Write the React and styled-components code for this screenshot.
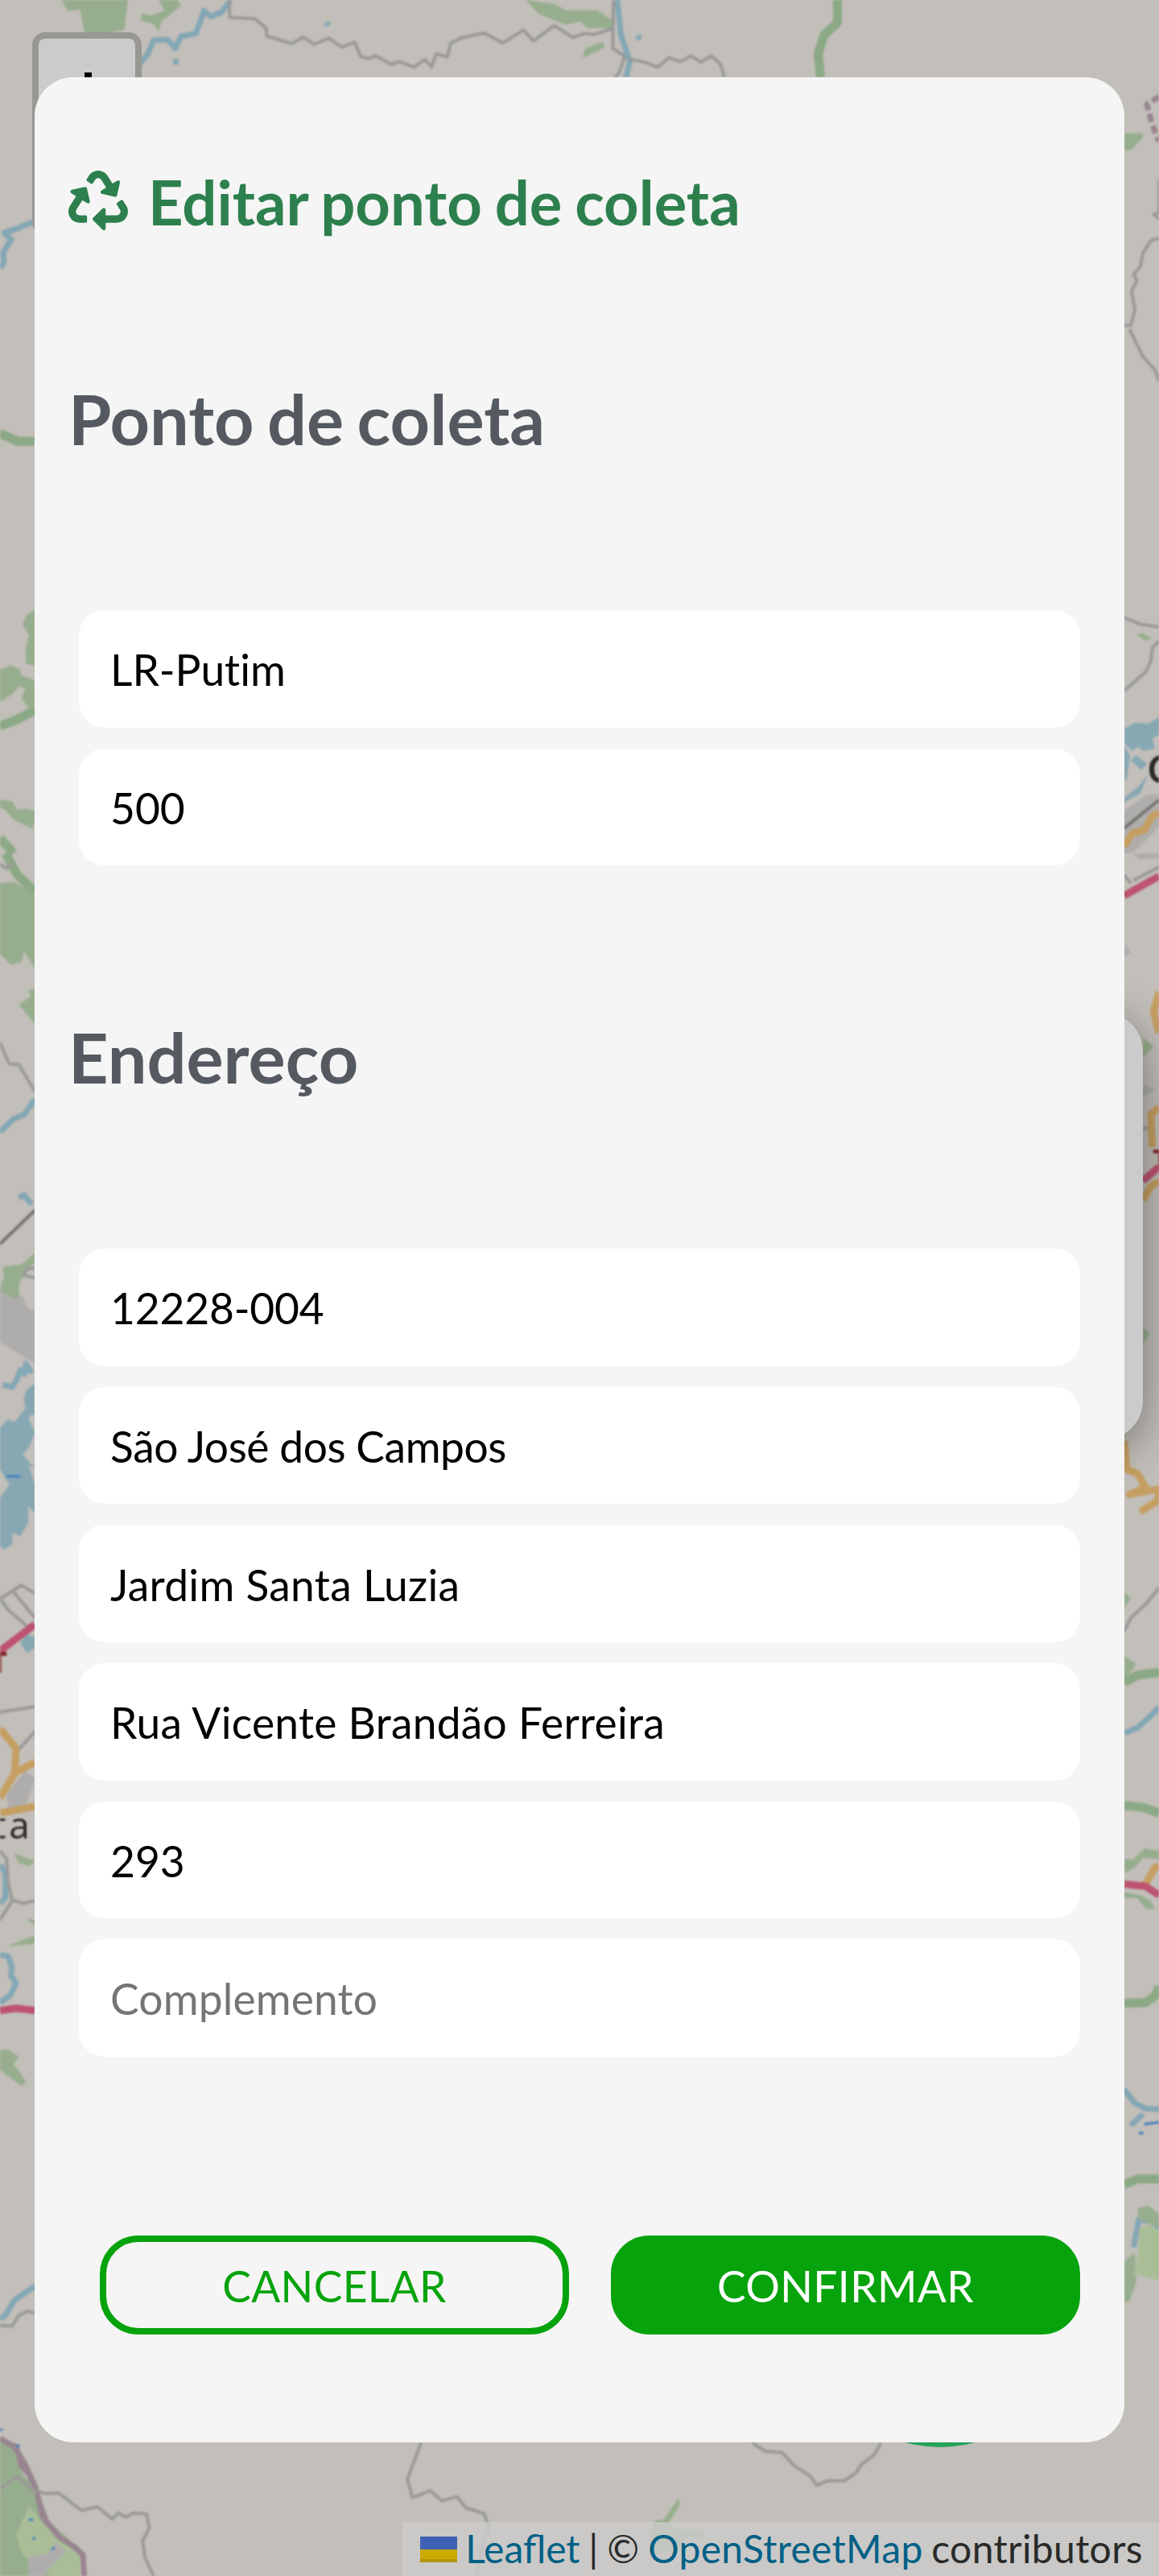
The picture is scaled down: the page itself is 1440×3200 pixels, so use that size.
import React from "react";
import styled, { createGlobalStyle } from "styled-components";
import { FaRecycle } from "react-icons/fa";

const GlobalStyle = createGlobalStyle`
  * { box-sizing: border-box; }
  body { margin: 0; font-family: Lato, "Liberation Sans", sans-serif; }
`;

const Screen = styled.main`
  position: relative;
  width: 1440px;
  height: 3200px;
  padding: 96px 43px 0;
  overflow: hidden;
  background: #c2beb9;
`;

const MapCanvas = styled.svg`
  position: absolute;
  inset: 0;
  width: 1440px;
  height: 3200px;
  filter: blur(0.8px);
  .soft path { vector-effect: non-scaling-stroke; }
  path { fill: none; stroke-linejoin: round; stroke-linecap: butt; }
  .wood { fill: #97ae8e; }
  .water { fill: #87a8b3; }
  .urban { fill: #aeadac; }
  .park { fill: #a9bd97; }
  .river { stroke: #83a7b5; stroke-width: 7; }
  .deep { stroke: #4380c0; stroke-width: 3; }
  .limit { stroke: #9a9a98; stroke-width: 4; }
  .state { stroke: #98858f; stroke-width: 7; }
  .trunk { stroke: #8aa984; stroke-width: 11; }
  .primary { stroke: #c59f62; stroke-width: 9; }
  .motorway { stroke: #bd5370; stroke-width: 9; }
  .rail { stroke: #777672; stroke-width: 4; }
  text { font-family: "Noto Sans", sans-serif; }
`;

const ZoomControl = styled.div`
  position: absolute;
  left: 40px;
  top: 40px;
  width: 136px;
  height: 252px;
  border: 8px solid #999792;
  border-radius: 16px;
  background: #cbcbcb;
  display: flex;
  justify-content: center;
  padding-top: 42px;
`;

const PlusIcon = styled.svg`
  width: 46px;
  height: 46px;
`;

const Popup = styled.div`
  position: absolute;
  left: 800px;
  top: 1258px;
  width: 620px;
  height: 530px;
  border-radius: 48px;
  background: #cbcbcb;
  box-shadow: 0 12px 56px rgba(0, 0, 0, 0.4);
`;

const Marker = styled.div`
  position: absolute;
  left: 1003px;
  top: 2710px;
  width: 330px;
  height: 330px;
  border-radius: 50%;
  background: #25a35a;
`;

const Attribution = styled.footer`
  position: absolute;
  right: 0;
  bottom: 0;
  height: 67px;
  padding: 0 20px 2px 22px;
  display: flex;
  align-items: center;
  background: rgba(204, 204, 204, 0.8);
  color: #292929;
  font-size: 48px;
  line-height: 65px;
  white-space: pre;
  letter-spacing: 0.36px;
  word-spacing: -2px;
`;

const MapLink = styled.span`
  color: #006086;
  letter-spacing: ${({ $tight }) => ($tight ? "0" : "0.3px")};
`;

const Flag = styled.svg`
  width: 46px;
  height: 32px;
  margin: 2px 10px 0 0;
`;

const Modal = styled.section`
  position: relative;
  width: 1354px;
  height: 2938px;
  padding: 109px 55px 0 42px;
  border-radius: 48px;
  background: #f5f5f5;
`;

const Title = styled.h1`
  display: flex;
  align-items: center;
  gap: 25px;
  height: 92px;
  margin: 0;
  color: #2d804e;
  font-size: 76px;
  line-height: 92px;
  font-weight: 700;
  white-space: nowrap;
  word-spacing: -2.7px;
`;

const RecycleIcon = styled(FaRecycle)`
  width: 74px;
  height: 74px;
  margin-bottom: 4px;
`;

const Group = styled.section`
  padding-top: ${({ $top }) => $top}px;
`;

const GroupTitle = styled.h2`
  height: 104px;
  margin: 0 0 186px;
  color: #555a61;
  font-size: 86.4px;
  line-height: 104px;
  font-weight: 700;
  word-spacing: -4.6px;
`;

const Fields = styled.div`
  display: flex;
  flex-direction: column;
  gap: 26px;
  padding-left: 13px;
`;

const Field = styled.input`
  display: block;
  width: 100%;
  height: 145.6px;
  padding: 1px 39px 0;
  border: 0;
  border-radius: 32px;
  outline: 0;
  background: #fff;
  color: #000;
  font: 400 53.33px Lato, "Liberation Sans", sans-serif;
  font-variant-ligatures: none;
  letter-spacing: ${({ $tracking }) => $tracking}px;
  &::placeholder { color: #757575; opacity: 1; }
`;

const Actions = styled.div`
  display: flex;
  gap: 52px;
  padding: 222px 0 0 39px;
`;

const Button = styled.button`
  flex: 1;
  height: 123px;
  padding: 2px 0 0;
  border: 8px solid #06a30c;
  border-radius: 48px;
  background: ${({ $filled }) => ($filled ? "#06a30c" : "transparent")};
  color: ${({ $filled }) => ($filled ? "#fff" : "#06a30c")};
  font: 400 53.33px Lato, "Liberation Sans", sans-serif;
  letter-spacing: 0.36px;
`;

const point = [
  { value: "LR-Putim", tracking: 0 },
  { value: "500", tracking: 0 },
];

const address = [
  { value: "12228-004", tracking: -0.2 },
  { value: "São José dos Campos", tracking: -0.43 },
  { value: "Jardim Santa Luzia", tracking: 0.28 },
  { value: "Rua Vicente Brandão Ferreira", tracking: 0.25 },
  { value: "293", tracking: 0 },
  { value: "", tracking: 0.15 },
];

function MapNorth() {
  return (
    <g className="soft" transform="scale(.91837 .33333)">
      <path className="wood" d="M83 0 92 42 108 35 115 132 140 125 168 112 173 0ZM215 0 222 40 205 58 192 50 190 75 208 90 215 118 218 80 232 50 245 20 240 0ZM712 0 728 50 765 92 785 80 795 105 828 105 828 75 808 38 765 38 750 15ZM815 155 792 180 788 215 802 198 818 178Z" />
      <path className="river" d="M312 0 300 45 285 62 276 40 265 125 245 135 237 180 227 148 208 150 200 200 185 250M835 0 840 130 852 230 847 288M442 84 444 96M238 220V240M863 132 865 148" />
      <path className="limit" d="M310 0 311 65 345 70 360 105 361 135 395 162 410 138 425 165 445 142 462 176 480 158 488 210 498 218 508 208 530 240 540 230 560 250 575 222 584 250 590 200 605 212 610 160 625 140 655 123 680 160 708 112 722 152 750 95 775 140 790 125 805 128 830 105M830 0 829 180 845 210 838 270 832 288M850 220 870 230 890 250 905 215 920 230 935 208 948 232 962 208 975 240 980 288" />
      <path className="trunk" d="M1133 0V85L1115 130 1107 200 1110 288" />
    </g>
  );
}

function MapWest() {
  return (
    <>
      <g className="soft" transform="scale(.33333 .676)">
        <path className="river" d="M130 407 90 414 75 418 15 428 42 440 12 464 15 482 0 492" />
        <path className="trunk" d="M0 796 65 811 130 811M0 1334 60 1323 130 1305M0 1540 50 1568" />
        <path className="wood" d="M130 1120 100 1130 83 1148 108 1166 96 1192 96 1220 130 1223ZM0 1230 40 1223 75 1230 80 1242 130 1250V1302L105 1300 80 1284 95 1264 70 1262 45 1276 0 1290ZM0 1470 45 1472 65 1488 95 1486 130 1490V1510L120 1523 50 1506 20 1488 0 1485Z" />
      </g>
      <g className="soft" transform="translate(0 1060) scale(.33333 .676)">
        <path className="wood" d="M0 55 50 53 100 65 130 66V212L90 180 80 200 40 205 0 185ZM130 248 105 252 115 263 70 278 130 314ZM10 760 80 755 130 735V752L90 770 70 795 72 820 10 826 0 812V800L15 778ZM70 872 130 865V882L80 880Z" />
        <path className="urban" d="M0 806 60 818 80 812 105 836 130 840V938L0 898Z" />
        <path className="trunk" d="M20 0 65 40 130 70" />
        <path className="water" d="M0 1055 30 1040 55 1045 75 1032 95 1020 88 1002 100 985 130 975V1030L105 1036 130 1065 110 1090 85 1105 130 1130 108 1125 130 1160V1212L105 1200V1230L75 1255 48 1248 45 1270 15 1280 0 1272V1185L35 1160 15 1145 0 1130ZM75 1450 100 1435 130 1440V1460L100 1470Z" />
        <path className="river" d="M0 512 50 488 90 480 130 452M70 633 90 628 118 645M10 976 45 981 65 965 75 950 90 957 97 938 118 955" />
        <path className="deep" d="M24 1145H76" />
        <path className="limit" d="M0 348 35 387 70 388 130 438M130 762 100 764 88 776 130 780M0 1370 80 1345 130 1360M0 1370 30 1390 100 1420M50 1357 130 1405M0 20 25 28 50 18" />
        <path className="rail" d="M0 718 130 656" />
        <path className="motorway" d="M0 1466 130 1417" />
      </g>
      <text x="-12" y="2078" fontSize="36" fontWeight="800" fill="#84292b">T</text>
      <g className="soft" transform="translate(0 2120) scale(.33333 .6888)">
        <path className="urban" d="M25 158 95 115 130 130 95 182 30 185ZM130 1540 90 1520 180 1480V1568H110Z" />
        <path className="wood" d="M0 620 30 618 70 632 50 645 75 660 98 678 80 684 0 655ZM50 264 90 272 130 278 110 288 70 282ZM130 385 95 382 130 394M35 430 130 413V428L40 432ZM0 1325 60 1340 75 1375 130 1420 80 1450 60 1568H0Z" />
        <path className="park" d="M70 1440 130 1430 180 1470V1530L110 1535 60 1500Z" />
        <path className="river" d="M0 285 20 300 20 345 0 355M0 448 30 450 45 470 40 485 60 498 40 520 0 534M0 1104 20 1098 55 1070 130 1045" />
        <path className="limit" d="M0 10 130 0M65 80 130 45M0 260 25 275 30 315 45 350 0 385M40 348 85 355 130 350M0 1116 45 1117 70 1098 105 1090 130 1094M0 1408 70 1388 130 1415 180 1420" />
        <path className="primary" d="M0 40 60 75 55 120 0 165M55 120 130 100M0 192 130 180" />
        <path className="motorway" d="M0 548 60 544 130 548" />
        <path className="state" d="M0 1323 60 1335 80 1370 110 1385 125 1410 150 1440 180 1480" />
        <path className="deep" d="M105 1466H122M120 1501H133M58 1333H73M0 1304H10" />
      </g>
      <text y="2284" fontSize="46" fill="#292927" stroke="#c9c6c2" strokeWidth="3" paintOrder="stroke">
        <tspan x="-9">t</tspan><tspan x="11">a</tspan>
      </text>
    </>
  );
}

function MapEast() {
  return (
    <>
      <g className="soft" transform="translate(1380 0) scale(.33333 .676)">
        <path className="wood" d="M50 245 120 245 118 254 75 276H50ZM95 1166 120 1163 155 1174 130 1177Z" />
        <path className="state" strokeDasharray="10 5" d="M180 178 135 192 150 220 165 242 180 260" />
        <path className="limit" d="M180 330 180 390 160 394 180 402M180 438 150 442 120 465 110 490 85 505 98 515 78 535 90 570 75 598 50 598M70 605 120 655 165 680 180 700M50 1135 110 1147 180 1152M180 1178 155 1190 150 1215 130 1235 50 1270" />
        <path className="water" d="M50 1340 90 1328 140 1330 180 1318V1350L155 1358 165 1375 120 1380 105 1372 80 1380 50 1365ZM50 1370 72 1390 60 1430 50 1436ZM75 1398 95 1388 135 1403 115 1415ZM50 1466 105 1445 140 1422 110 1458 50 1475Z" />
        <path className="urban" d="M50 1490 130 1462 180 1460V1520L80 1568H50Z" />
        <path className="rail" d="M50 1522 180 1470" />
        <path className="primary" d="M50 1555 80 1532 125 1525 155 1500 180 1494" />
      </g>
      <text x="1425" y="973" fontSize="48" fontWeight="600" fill="#292927" stroke="#c9c6c2" strokeWidth="3" paintOrder="stroke">G</text>
      <g className="soft" transform="translate(1380 1060) scale(.33333 .676)">
        <path className="urban" d="M80 0H180V8L110 12ZM50 165 75 182 50 190ZM120 425 168 435 120 448Z" />
        <path className="wood" d="M120 338 160 355 120 376ZM120 872 145 882 120 902ZM50 1357 75 1370 50 1387ZM50 1475 95 1490 50 1520Z" />
        <path className="limit" d="M85 50 180 25M50 40 75 55M120 505H150M180 1350 130 1380 75 1405 50 1430" />
        <path className="primary" d="M180 255 160 290 180 330M180 467 150 480 155 540M120 637 150 612 180 602M50 1080 60 1132 100 1140 130 1165 70 1178 180 1168 175 1190 110 1210" />
        <path className="motorway" d="M50 78 180 42M120 602 180 576" />
        <path className="trunk" d="M50 1524 100 1510 180 1505" />
      </g>
      <text x="1432" y="1452" fontSize="34" fontWeight="800" fill="#84292b">T</text>
      <g className="soft" transform="translate(1380 2120) scale(.33333 .6888)">
        <path className="trunk" d="M50 178 120 182 180 192M50 535 130 534 165 522 180 505M50 862 100 852 180 852" />
        <path className="river" d="M50 48 100 38 130 25 180 2M50 690 90 715 130 725 180 726M75 755 120 735M85 975 105 925 160 930 180 942" />
        <path className="wood" d="M50 275 85 275 125 256 180 260V275L120 273 90 290 50 300ZM50 335 110 340 150 350 165 365 130 365 100 345 50 345ZM100 905 140 900 180 915V940L105 925ZM50 1000 90 985 95 1038 70 1072 50 1075Z" />
        <path className="park" d="M105 940 150 935 180 945V1035L85 1022 105 980Z" />
        <path className="primary" d="M130 320 165 290 180 288" />
        <path className="motorway" d="M50 320 130 324 180 340" />
        <path className="deep" d="M125 753 180 750M105 769H122" />
      </g>
    </>
  );
}

function MapSouth() {
  return (
    <g className="soft" transform="translate(0 2940) scale(.91837 .33333)">
      <path className="wood" d="M0 270 20 300 25 390 50 450 60 560 100 660 105 780H0ZM918 490 920 515 905 580 912 605 950 610 955 640 925 640 920 680 885 700 880 620 885 575 898 570Z" />
      <path className="park" d="M40 520 60 590 108 680 108 780H68L30 700 22 620Z" />
      <path className="urban" d="M75 650 90 690 70 740 60 780H38V710L65 695Z" />
      <path className="state" d="M0 268 20 300 35 370 48 450 58 560 80 635 100 670 112 700 114 780" />
      <path className="limit" d="M0 455 22 410 50 470M60 472H80L110 535 132 522 152 568 160 545 170 560 180 545 198 548 202 600 193 650 196 710 208 780M570 282 551 420 558 488 582 462 598 500 618 484 630 525 655 548 662 600 655 640 645 780M1018 284 1035 315 1058 320 1075 370 1095 405 1105 442 1120 425 1143 425 1158 395 1165 365 1182 330 1192 284" />
      <path className="deep" d="M39 570H45M44 640H48M70 678H74M22 294H26" />
    </g>
  );
}

export default function App() {
  return (
    <>
      <GlobalStyle />
      <Screen>
        <MapCanvas viewBox="0 0 1440 3200" aria-hidden="true">
          <MapNorth />
          <MapWest />
          <MapEast />
          <MapSouth />
        </MapCanvas>
        <ZoomControl>
          <PlusIcon viewBox="0 0 46 46" stroke="#000" strokeWidth="9">
            <path d="M24.5 0V46M0 23H46" />
          </PlusIcon>
        </ZoomControl>
        <Popup />
        <Marker />
        <Attribution>
          <Flag viewBox="0 0 12 8" preserveAspectRatio="none">
            <path fill="#3d62b4" d="M0 0h12v4H0z" />
            <path fill="#ccaa00" d="M0 4h12v3H0z" />
            <path fill="#b39600" d="M0 7h12v1H0z" />
          </Flag>
          <MapLink $tight>Leaflet</MapLink> | © <MapLink>OpenStreetMap</MapLink> contributors
        </Attribution>
        <Modal>
          <Title>
            <RecycleIcon />
            Editar ponto de coleta
          </Title>
          <Group $top={171}>
            <GroupTitle>Ponto de coleta</GroupTitle>
            <Fields>
              {point.map(({ value, tracking }) => (
                <Field key={value} defaultValue={value} $tracking={tracking} />
              ))}
            </Fields>
          </Group>
          <Group $top={186}>
            <GroupTitle>Endereço</GroupTitle>
            <Fields>
              {address.map(({ value, tracking }) => (
                <Field key={value} defaultValue={value} placeholder="Complemento" $tracking={tracking} />
              ))}
            </Fields>
          </Group>
          <Actions>
            <Button type="button">CANCELAR</Button>
            <Button type="button" $filled>CONFIRMAR</Button>
          </Actions>
        </Modal>
      </Screen>
    </>
  );
}
